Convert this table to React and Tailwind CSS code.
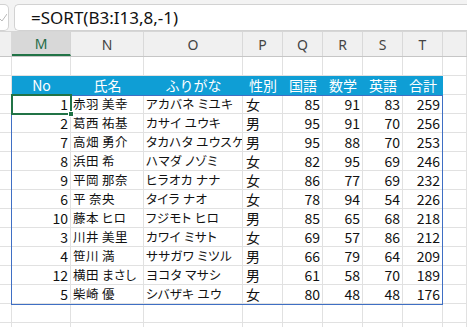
import React from "react";

const cols = ["L", "M", "N", "O", "P", "Q", "R", "S", "T", "U"];
const heads = ["No", "氏名", "ふりがな", "性別", "国語", "数学", "英語", "合計"];

const rows = [
  [1, "赤羽 美幸", "アカバネ ミユキ", "女", 85, 91, 83, 259],
  [2, "葛西 祐基", "カサイ ユウキ", "男", 95, 91, 70, 256],
  [7, "高畑 勇介", "タカハタ ユウスケ", "男", 95, 88, 70, 253],
  [8, "浜田 希", "ハマダ ノゾミ", "女", 82, 95, 69, 246],
  [9, "平岡 那奈", "ヒラオカ ナナ", "女", 86, 77, 69, 232],
  [6, "平 奈央", "タイラ ナオ", "女", 78, 94, 54, 226],
  [10, "藤本 ヒロ", "フジモト ヒロ", "男", 85, 65, 68, 218],
  [3, "川井 美里", "カワイ ミサト", "女", 69, 57, 86, 212],
  [4, "笹川 満", "ササガワ ミツル", "男", 66, 79, 64, 209],
  [12, "横田 まさし", "ヨコタ マサシ", "男", 61, 58, 70, 189],
  [5, "柴崎 優", "シバザキ ユウ", "女", 80, 48, 48, 176],
];

const grid = "grid grid-cols-[12px_59px_73px_99px_40px_40px_40px_40px_40px_1fr]";
const cell = "h-[19px] border-r border-b border-[#e1e1e1] overflow-hidden whitespace-nowrap leading-[18px]";
const num = " text-right pr-[2px] text-[14px]";
const kana = " pl-[2px] text-[12.5px] tracking-[0.4px] [font-feature-settings:'palt']";

function Blank() {
  return (
    <div className={grid}>
      {cols.map(c => <div key={c} className={cell} />)}
    </div>
  );
}

export default function App() {
  return (
    <div className="w-[467px] h-[327px] overflow-hidden bg-white font-['Noto_Sans_CJK_JP',sans-serif] text-[13px] text-[#111]">
      {/* formula bar */}
      <div className="h-[32px] bg-[#f3f3f3] pt-[4px] flex gap-[5px] border-b border-[#d6d6d6]">
        <div className="w-[9px] h-[27px] bg-white border border-l-0 border-[#d2d2d2] rounded-r-[5px] flex items-center overflow-hidden">
          <svg width="8" height="10" viewBox="0 0 8 10" className="-ml-[1px]">
            <polyline points="0,5 3,8 8,1" fill="none" stroke="#b8b8b8" strokeWidth="1" />
          </svg>
        </div>
        <div className="flex-1 h-[27px] bg-white border border-r-0 border-[#d2d2d2] rounded-l-[5px] flex items-center pl-[16px] font-['Noto_Sans',sans-serif] text-[17px] text-[#111]">
          =SORT(B3:I13,8,-1)
        </div>
      </div>

      {/* column letters */}
      <div className={grid + " h-[25px] bg-[#f0f0f0] border-b border-[#c6c6c6] font-['Noto_Sans',sans-serif] text-[14px] text-[#444]"}>
        {cols.map(c => (
          <div
            key={c}
            className={
              c === "M"
                ? "bg-[#d8d8d8] border-r border-[#d4d4d4] border-b-2 border-b-[#217346] flex items-center justify-center text-[#1f6b47]"
                : "border-r border-[#d9d9d9] flex items-center justify-center"
            }
          >
            {c === "L" || c === "U" ? "" : c}
          </div>
        ))}
      </div>

      <div className="relative">
        <Blank />
        {/* table header */}
        <div className={grid}>
          <div className={cell} />
          {heads.map(h => (
            <div key={h} className="h-[19px] bg-[#0f9ed5] text-white text-center text-[14px] leading-[19px] overflow-hidden">
              {h}
            </div>
          ))}
          <div className={cell} />
        </div>
        {rows.map(r => (
          <div key={r[0]} className={grid}>
            <div className={cell} />
            <div className={cell + num}>{r[0]}</div>
            <div className={cell + kana}>{r[1]}</div>
            <div className={cell + kana}>{r[2]}</div>
            <div className={cell + " pl-[3px] text-[14px]"}>{r[3]}</div>
            {r.slice(4).map((v, i) => (
              <div key={i} className={cell + num}>{v}</div>
            ))}
            <div className={cell} />
          </div>
        ))}
        <Blank />
        <Blank />

        {/* spill range border */}
        <div className="absolute left-[11px] top-[38px] w-[432px] h-[210px] border border-[#3f6fc4] pointer-events-none" />
        {/* active cell */}
        <div className="absolute left-[11px] top-[37px] w-[61px] h-[21px] border-2 border-[#217346] pointer-events-none" />
        <div className="absolute left-[68px] top-[54px] w-[6px] h-[6px] bg-[#217346] border border-white" />
      </div>
    </div>
  );
}
